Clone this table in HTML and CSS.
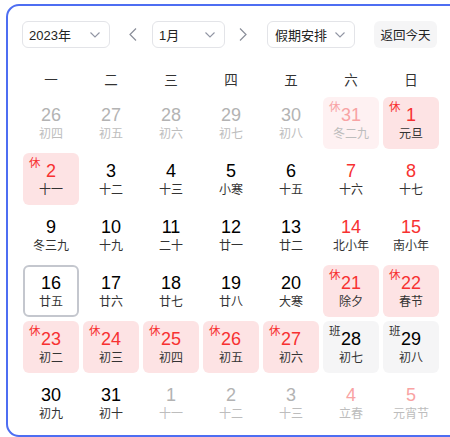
FILE: index.html
```html
<!DOCTYPE html>
<html lang="zh-CN">
<head>
<meta charset="utf-8">
<link rel="stylesheet" href="styles.css">
</head>
<body>
<div class="panel">
  <div class="toolbar">
    <div class="select sel-year"><span>2023年</span><svg class="chev" width="10" height="6" viewBox="0 0 10 6"><polyline points="0.5,0.5 5,5 9.5,0.5"/></svg></div>
    <div class="arrow arrow-prev"><svg width="8" height="13" viewBox="0 0 8 13"><polyline points="7,0.5 1,6.5 7,12.5"/></svg></div>
    <div class="select sel-month"><span>1月</span><svg class="chev" width="10" height="6" viewBox="0 0 10 6"><polyline points="0.5,0.5 5,5 9.5,0.5"/></svg></div>
    <div class="arrow arrow-next"><svg width="8" height="13" viewBox="0 0 8 13"><polyline points="1,0.5 7,6.5 1,12.5"/></svg></div>
    <div class="select sel-holiday"><span>假期安排</span><svg class="chev" width="10" height="6" viewBox="0 0 10 6"><polyline points="0.5,0.5 5,5 9.5,0.5"/></svg></div>
    <div class="today-btn">返回今天</div>
  </div>

  <div class="week">
    <span>一</span><span>二</span><span>三</span><span>四</span><span>五</span><span>六</span><span>日</span>
  </div>

  <div class="grid">
    <div class="cell other"><b>26</b><i>初四</i></div>
    <div class="cell other"><b>27</b><i>初五</i></div>
    <div class="cell other"><b>28</b><i>初六</i></div>
    <div class="cell other"><b>29</b><i>初七</i></div>
    <div class="cell other"><b>30</b><i>初八</i></div>
    <div class="cell other rest"><em>休</em><b>31</b><i>冬二九</i></div>
    <div class="cell rest"><em>休</em><b>1</b><i>元旦</i></div>

    <div class="cell rest"><em>休</em><b>2</b><i>十一</i></div>
    <div class="cell"><b>3</b><i>十二</i></div>
    <div class="cell"><b>4</b><i>十三</i></div>
    <div class="cell"><b>5</b><i>小寒</i></div>
    <div class="cell"><b>6</b><i>十五</i></div>
    <div class="cell weekend"><b>7</b><i>十六</i></div>
    <div class="cell weekend"><b>8</b><i>十七</i></div>

    <div class="cell"><b>9</b><i>冬三九</i></div>
    <div class="cell"><b>10</b><i>十九</i></div>
    <div class="cell"><b>11</b><i>二十</i></div>
    <div class="cell"><b>12</b><i>廿一</i></div>
    <div class="cell"><b>13</b><i>廿二</i></div>
    <div class="cell weekend"><b>14</b><i>北小年</i></div>
    <div class="cell weekend"><b>15</b><i>南小年</i></div>

    <div class="cell today"><b>16</b><i>廿五</i></div>
    <div class="cell"><b>17</b><i>廿六</i></div>
    <div class="cell"><b>18</b><i>廿七</i></div>
    <div class="cell"><b>19</b><i>廿八</i></div>
    <div class="cell"><b>20</b><i>大寒</i></div>
    <div class="cell rest"><em>休</em><b>21</b><i>除夕</i></div>
    <div class="cell rest"><em>休</em><b>22</b><i>春节</i></div>

    <div class="cell rest"><em>休</em><b>23</b><i>初二</i></div>
    <div class="cell rest"><em>休</em><b>24</b><i>初三</i></div>
    <div class="cell rest"><em>休</em><b>25</b><i>初四</i></div>
    <div class="cell rest"><em>休</em><b>26</b><i>初五</i></div>
    <div class="cell rest"><em>休</em><b>27</b><i>初六</i></div>
    <div class="cell work"><em>班</em><b>28</b><i>初七</i></div>
    <div class="cell work"><em>班</em><b>29</b><i>初八</i></div>

    <div class="cell"><b>30</b><i>初九</i></div>
    <div class="cell"><b>31</b><i>初十</i></div>
    <div class="cell other"><b>1</b><i>十一</i></div>
    <div class="cell other"><b>2</b><i>十二</i></div>
    <div class="cell other"><b>3</b><i>十三</i></div>
    <div class="cell other weekend"><b>4</b><i>立春</i></div>
    <div class="cell other weekend"><b>5</b><i>元宵节</i></div>
  </div>
</div>
</body>
</html>
```

FILE: styles.css
```css
html, body {
  margin: 0;
  padding: 0;
  background: #fff;
  overflow: hidden;
}
body {
  width: 450px;
  height: 437px;
  font-family: "Liberation Sans", "Noto Sans CJK SC", Arial, sans-serif;
  color: #222;
}
.panel {
  margin: 4px 0 0 6px;
  width: 460px;
  height: 433px;
  border: 2px solid #4e6ef2;
  border-radius: 13px;
  padding: 15px 0 0 14px;
  box-sizing: border-box;
}
.toolbar {
  display: flex;
  align-items: center;
  height: 27px;
}
.select {
  box-sizing: border-box;
  height: 27px;
  border: 1px solid #e3e4e8;
  border-radius: 6px;
  display: flex;
  align-items: center;
  justify-content: space-between;
  padding: 0 9px 0 6px;
  font-size: 13px;
  color: #222;
  font-family: "Liberation Sans", "Noto Sans CJK SC", sans-serif;
}
.chev {
  fill: none;
  stroke: #9195a3;
  stroke-width: 1.1;
}
.sel-year { width: 88px; }
.sel-month { width: 73px; }
.sel-holiday { width: 88px; padding-left: 7px; }
.arrow {
  width: 20px;
  height: 27px;
  display: flex;
  align-items: center;
  justify-content: center;
}
.arrow svg {
  fill: none;
  stroke: #8a8e99;
  stroke-width: 1.2;
}
.arrow-prev { margin: 0 9px 0 13px; }
.arrow-next { margin: 0 14px 0 8px; }
.today-btn {
  margin-left: 19px;
  width: 63px;
  height: 27px;
  box-sizing: border-box;
  border-radius: 6px;
  background: #f5f5f6;
  display: flex;
  align-items: center;
  justify-content: center;
  font-size: 12.5px;
  color: #222;
}
.week {
  display: grid;
  grid-template-columns: repeat(7, 56px);
  column-gap: 4px;
  margin: 12px 0 0 1px;
  height: 37px;
  align-items: center;
  font-size: 13.5px;
  color: #333;
}
.week span {
  text-align: center;
}
.grid {
  display: grid;
  grid-template-columns: repeat(7, 56px);
  grid-auto-rows: 52px;
  gap: 4px;
  margin-left: 1px;
}
.cell {
  position: relative;
  box-sizing: border-box;
  border-radius: 6px;
  display: flex;
  flex-direction: column;
  align-items: center;
  justify-content: center;
}
.cell b {
  font-weight: normal;
  font-size: 18px;
  line-height: 22px;
  color: #000;
  font-family: "Liberation Sans", Arial, sans-serif;
}
.cell i {
  font-style: normal;
  font-size: 12px;
  line-height: 16px;
  color: #333;
}
.cell em {
  position: absolute;
  left: 6px;
  top: 3px;
  font-style: normal;
  font-size: 11.5px;
  line-height: 14px;
  color: #f73131;
}
.cell.weekend b { color: #f73131; }
.cell.rest { background: #fde3e4; }
.cell.rest b { color: #f73131; }
.cell.work { background: #f5f5f6; }
.cell.work em { color: #333; }
.cell.today { border: 2px solid #c4c7ce; }
.cell.other b { color: #b3b3b3; }
.cell.other i { color: #bdbdbd; }
.cell.other.weekend b { color: #f9a3a3; }
.cell.other.rest { background: #fef1f2; }
.cell.other.rest b { color: #f8a3a4; }
.cell.other.rest em { color: #f8a3a4; }
```
